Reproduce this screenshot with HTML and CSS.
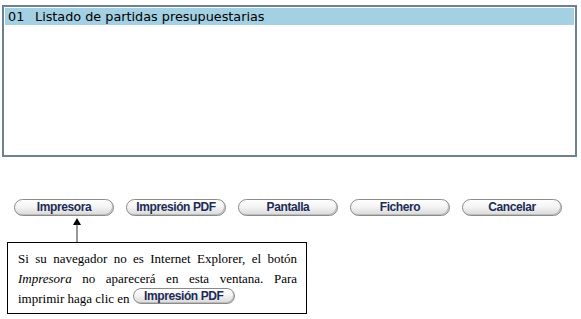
FILE: index.html
```html
<!DOCTYPE html>
<html>
<head>
    <title>Listados</title>
    <link rel="stylesheet" href="styles.css">
</head>
<body>
    <div class="lista">
        <div class="fila fila-sel"><span class="codigo">01</span>Listado de partidas presupuestarias</div>
    </div>
    <div class="botones">
        <button class="btn">Impresora</button>
        <button class="btn">Impresión PDF</button>
        <button class="btn">Pantalla</button>
        <button class="btn">Fichero</button>
        <button class="btn">Cancelar</button>
    </div>
    <div class="flecha">
        <svg width="10" height="24" viewBox="0 0 10 24">
            <polygon points="5,0 9,7 1,7" fill="#000"/>
            <rect x="4.5" y="6" width="1" height="18" fill="#333"/>
        </svg>
    </div>
    <div class="nota">
        Si su navegador no es Internet Explorer, el botón <i>Impresora</i> no aparecerá en esta ventana. Para imprimir haga clic en <span class="btn btn-mini">Impresión PDF</span>
    </div>
</body>
</html>
```

FILE: styles.css
```css
body {
    margin: 0;
    background: #fff;
    font-family: "DejaVu Sans", Verdana, sans-serif;
}
.lista {
    margin: 5px 4px 0 2px;
    height: 146px;
    border: 2px solid #6c8290;
    padding: 1px;
}
.fila {
    height: 17px;
    line-height: 17px;
    font-size: 12.8px;
    padding-left: 3px;
    color: #000;
}
.fila-sel {
    background: #a3d0e3;
}
.codigo {
    display: inline-block;
    width: 27px;
}
.botones {
    display: flex;
    gap: 12px;
    margin: 42px 0 0 14px;
}
.btn {
    display: inline-block;
    box-sizing: border-box;
    width: 100px;
    height: 17px;
    padding: 0;
    border: 1px solid #8a8a8a;
    border-radius: 9px;
    background: linear-gradient(#ffffff 0%, #f4f4f4 45%, #d9d9d9 100%);
    box-shadow: inset -1px -1px 0 #bdbdbd;
    font-family: "Liberation Sans", Arial, sans-serif;
    font-weight: bold;
    font-size: 12px;
    line-height: 15px;
    letter-spacing: -0.4px;
    color: #1c2b55;
    text-align: center;
}
.flecha {
    margin: 2px 0 0 72px;
    height: 24px;
}
.flecha svg {
    display: block;
}
.nota {
    box-sizing: border-box;
    width: 300px;
    margin: 0 0 0 7px;
    border: 1px solid #000;
    padding: 6px 9px 4px 10px;
    font-family: "Liberation Serif", "Times New Roman", serif;
    font-size: 13px;
    line-height: 19.5px;
    text-align: justify;
    color: #000;
}
.btn-mini {
    width: 102px;
    height: 16px;
    line-height: 14px;
    vertical-align: 3px;
}
```
